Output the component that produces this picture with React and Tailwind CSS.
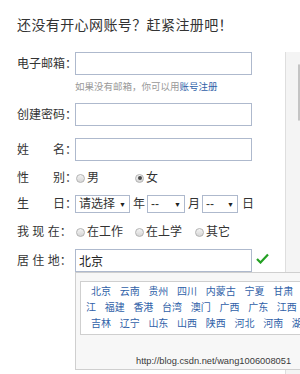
import React from 'react';

const font = { fontFamily: '"Liberation Sans", "Noto Sans CJK SC", sans-serif' };

function Radio({ checked, label, width }) {
  return (
    <label className={`flex items-center ${width}`}>
      <span className="ml-[1px] w-[9px] h-[9px] rounded-full border border-[#b3b3b3] bg-gradient-to-b from-[#f4f4f4] to-[#d6d6d6] flex items-center justify-center">
        {checked && <span className="w-[4px] h-[4px] rounded-full bg-[#4a4a4a]" />}
      </span>
      <span className="ml-[2px]">{label}</span>
    </label>
  );
}

function Select({ text, width }) {
  return (
    <div className={`${width} h-[18px] border border-[#aeb9cd] bg-white flex items-center justify-between pl-[3px] pr-[3px] text-[12px] leading-[16px]`}>
      <span>{text}</span>
      <span className="text-[7px] leading-[7px] text-[#222]">▼</span>
    </div>
  );
}

const rows = [
  { shift: false, items: ['北京', '云南', '贵州', '四川', '内蒙古', '宁夏', '甘肃'] },
  { shift: true, items: ['江', '福建', '香港', '台湾', '澳门', '广西', '广东', '江西'] },
  { shift: false, items: ['吉林', '辽宁', '山东', '山西', '陕西', '河北', '河南', '湖北'] },
];

function Label({ children }) {
  return <span className="w-[58px] shrink-0 leading-[16px] whitespace-pre">{children}</span>;
}

export default function App() {
  return (
    <div className="w-[300px] h-[374px] overflow-hidden bg-white text-[#333]" style={font}>
      <h1 className="pl-[17px] pt-[17px] text-[14px] leading-[16px] tracking-[0.4px] text-[#333] whitespace-nowrap">
        还没有开心网账号？赶紧注册吧！
      </h1>

      <div className="flex mt-[19px]">
        <div className="w-[285px] shrink-0 pl-[17px] text-[12px]">
          <div className="flex items-center h-[23px]">
            <Label>电子邮箱：</Label>
            <input readOnly className="w-[177px] h-[23px] border border-[#aeb9cd] bg-white outline-none" />
          </div>
          <div className="pl-[58px] mt-[5px] h-[14px] text-[9.5px] leading-[14px] text-[#999] whitespace-nowrap">
            如果没有邮箱，你可以用<span className="text-[#2f5fa8]">账号注册</span>
          </div>

          <div className="flex items-center h-[23px] mt-[9px]">
            <Label>创建密码：</Label>
            <input readOnly type="password" className="w-[177px] h-[23px] border border-[#aeb9cd] bg-white outline-none" />
          </div>

          <div className="flex items-center h-[23px] mt-[12px]">
            <Label>姓　　名：</Label>
            <input readOnly className="w-[177px] h-[23px] border border-[#aeb9cd] bg-white outline-none" />
          </div>

          <div className="flex items-center h-[16px] mt-[9px] leading-[16px]">
            <Label>性　　别：</Label>
            <Radio label="男" width="w-[59px]" />
            <Radio label="女" checked width="w-[59px]" />
          </div>

          <div className="flex items-center h-[18px] mt-[9px] leading-[16px]">
            <Label>生　　日：</Label>
            <Select text="请选择" width="w-[55px]" />
            <span className="ml-[3px]">年</span>
            <div className="ml-[2px]"><Select text="--" width="w-[38px]" /></div>
            <span className="ml-[3px]">月</span>
            <div className="ml-[2px]"><Select text="--" width="w-[36px]" /></div>
            <span className="ml-[4px]">日</span>
          </div>

          <div className="flex items-center h-[16px] mt-[11px] leading-[16px]">
            <Label>我 现 在：</Label>
            <Radio label="在工作" width="w-[59px]" />
            <Radio label="在上学" width="w-[60px]" />
            <Radio label="其它" width="w-[50px]" />
          </div>

          <div className="flex items-center h-[23px] mt-[9px]">
            <Label>居 住 地：</Label>
            <div className="relative">
              <input readOnly defaultValue="北京" className="w-[177px] h-[23px] border border-[#aeb9cd] bg-white outline-none pl-[3px] text-[12px] text-[#222]" />
              <div className="absolute top-full left-0 z-10 w-[240px] h-[98px] border border-[#cfcfcf] bg-[#f7f7f7] pt-[8px] pl-[4px]">
                <div className="h-[54px] border border-[#cfcfcf] bg-white pt-[2px] pl-[10px] text-[10px] leading-[16px] text-[#2f5fa8]">
                  {rows.map((row, i) => (
                    <div key={i} className={`flex gap-[8.7px] whitespace-nowrap ${row.shift ? '-ml-[5px]' : ''}`}>
                      {row.items.map((p) => (
                        <span key={p}>{p}</span>
                      ))}
                    </div>
                  ))}
                </div>
                <div className="mt-[20px] pl-[56px] text-[9.3px] leading-[12px] text-[#3a3a3a] whitespace-nowrap">
                  http://blog.csdn.net/wang1006008051
                </div>
              </div>
            </div>
            <svg className="ml-[4px] -mt-[4px]" width="13" height="11" viewBox="0 0 13 11">
              <path d="M1 6 L4.5 9.5 L12 1.5" fill="none" stroke="#23a023" strokeWidth="2.2" />
            </svg>
          </div>
        </div>

        <div className="flex-1 h-[322px] bg-[#f4f4f4] border-l border-[#dedede] pt-[12px] pl-[12px]">
          <div className="h-[57px] border border-[#c4c4c4] rounded-[3px] bg-[#f9f9f9]" />
        </div>
      </div>
    </div>
  );
}
